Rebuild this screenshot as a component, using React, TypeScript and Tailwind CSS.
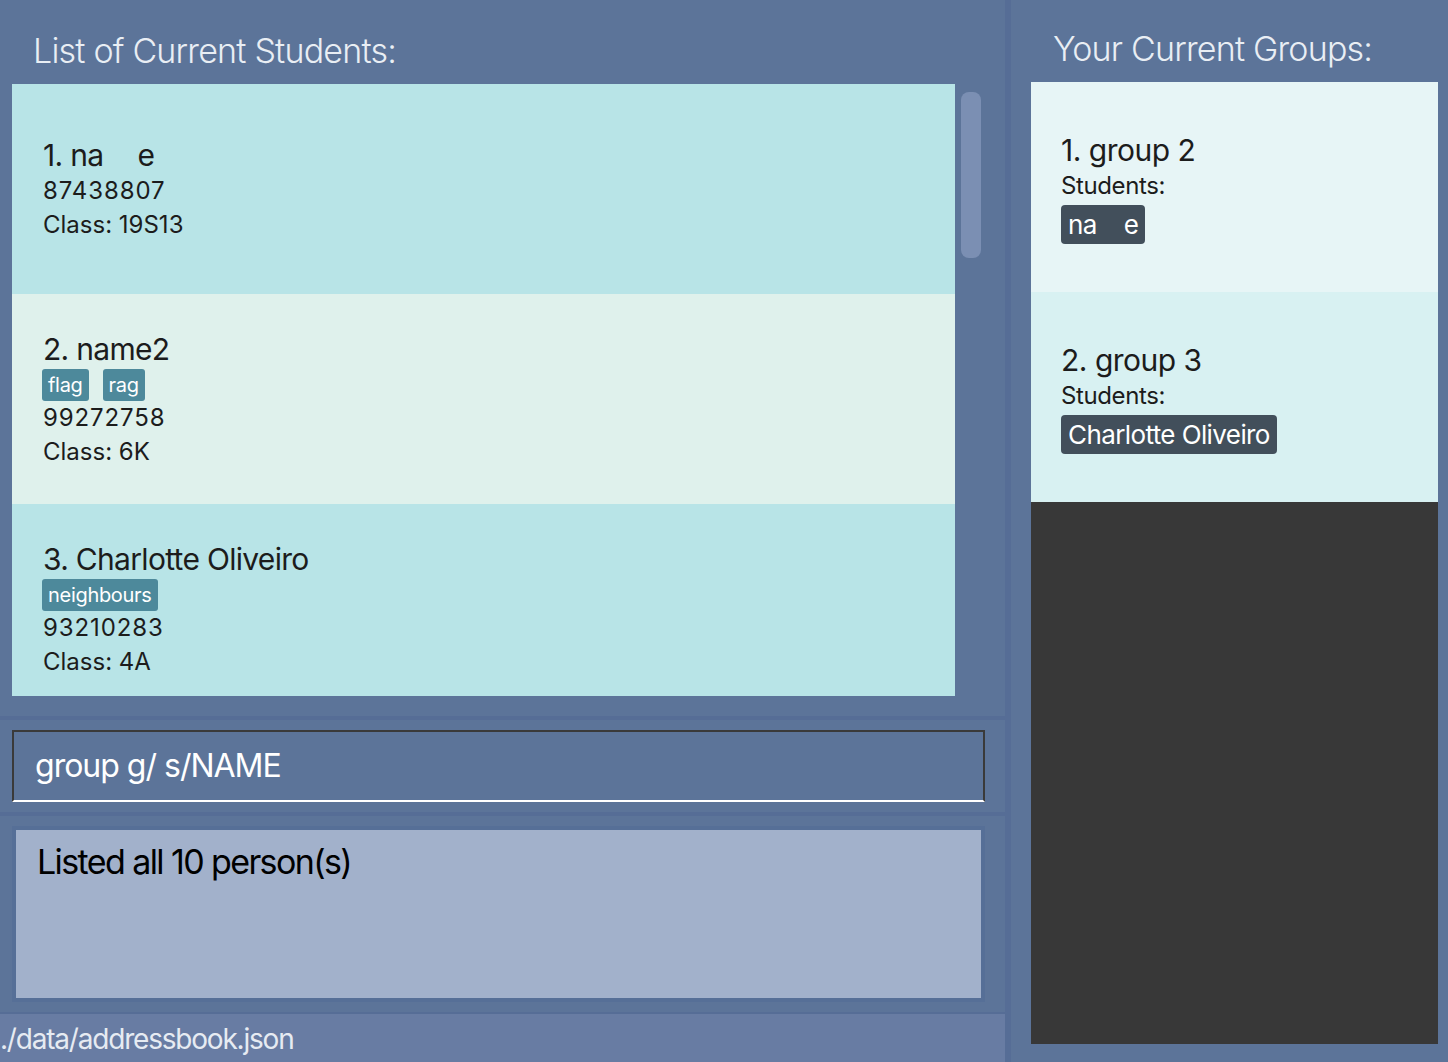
import React from "react";

const font = { fontFamily: "Inter, 'Noto Sans', sans-serif" };

function Spacer({ w }: { w: number }) {
  return <span className="inline-block" style={{ width: w }} />;
}

type Person = { idx: number; name: React.ReactNode; tags: string[]; phone: string; cls: string; bg: string };

function PersonCard({ p }: { p: Person }) {
  return (
    <div className={`h-[210px] shrink-0 flex flex-col justify-center pl-[31px] text-[#1c1c1c] ${p.bg}`}>
      <div className="text-[30px] leading-[38px] tracking-[-0.7px]">
        {p.idx}. {p.name}
      </div>
      {p.tags.length > 0 && (
        <div className="flex gap-[14px] mt-[1px] -ml-[1px]">
          {p.tags.map((t) => (
            <span key={t} className="h-[32px] px-[6px] rounded-[3px] bg-[#4d899b] text-white text-[20px] leading-[32px] tracking-[-0.3px]">
              {t}
            </span>
          ))}
        </div>
      )}
      <div className="text-[24px] leading-[34px] tracking-[0.9px]">{p.phone}</div>
      <div className="text-[24px] leading-[34px] tracking-[0px]">Class: {p.cls}</div>
    </div>
  );
}

function GroupCard({ idx, name, member, bg }: { idx: number; name: string; member: React.ReactNode; bg: string }) {
  return (
    <div className={`h-[210px] shrink-0 flex flex-col justify-center pl-[30px] text-[#1c1c1c] ${bg}`}>
      <div className="text-[30px] leading-[36px] tracking-[-0.5px] mt-[2px]">
        {idx}. {name}
      </div>
      <div className="text-[24px] leading-[32px] tracking-[-0.4px] mt-[2px]">Students:</div>
      <div className="flex mt-[3px]">
        <span className="h-[39px] px-[7px] rounded-[4px] bg-[#424f5b] text-white text-[26px] leading-[39px] tracking-[-0.6px]">
          {member}
        </span>
      </div>
    </div>
  );
}

export default function App() {
  const people: Person[] = [
    { idx: 1, name: <>na<Spacer w={34} />e</>, tags: [], phone: "87438807", cls: "19S13", bg: "bg-[#b8e4e7]" },
    { idx: 2, name: "name2", tags: ["flag", "rag"], phone: "99272758", cls: "6K", bg: "bg-[#dff1ec]" },
    { idx: 3, name: "Charlotte Oliveiro", tags: ["neighbours"], phone: "93210283", cls: "4A", bg: "bg-[#b8e4e7]" },
  ];

  return (
    <div className="w-[1448px] h-[1062px] flex bg-[#5c7499] overflow-hidden" style={font}>
      {/* Left column */}
      <div className="w-[1005px] h-full flex flex-col">
        {/* person list section */}
        <div className="h-[716px] flex flex-col">
          <div className="h-[84px] pl-[33px] pt-[29px] text-[34px] leading-[44px] text-[#e9eef4] font-light tracking-[-0.8px]">
            List of Current Students:
          </div>
          <div className="h-[612px] flex pl-[12px]">
            <div className="w-[943px] h-full overflow-hidden flex flex-col">
              {people.map((p) => (
                <PersonCard key={p.idx} p={p} />
              ))}
            </div>
            <div className="pl-[6px] pt-[8px]">
              <div className="w-[20px] h-[166px] rounded-[8px] bg-[#7b8fb3]" />
            </div>
          </div>
        </div>

        {/* command box */}
        <div className="h-[96px] border-t-4 border-[#566d96] pt-[10px] pl-[12px]">
          <div className="w-[973px] h-[72px] border-t-2 border-x-2 border-[#3a3a3a] border-b-2 border-b-white flex items-center pl-[21px] text-white text-[32px] tracking-[-1px]">
            group g/ s/NAME
          </div>
        </div>

        {/* result display */}
        <div className="h-[200px] border-t-4 border-[#566d96] pt-[10px] pl-[12px]">
          <div className="w-[973px] h-[176px] border-4 border-[#566f97] bg-[#a2b1cb] pl-[21px] pt-[10px] text-[34px] leading-[44px] text-black tracking-[-1.6px]">
            Listed all 10 person(s)
          </div>
        </div>

        {/* status bar */}
        <div className="flex-1 border-t-2 border-[#566d96] bg-[#687ca3] flex items-center text-[28px] pt-[2px] text-[#e6ebf2] tracking-[-1.2px]">
          ./data/addressbook.json
        </div>
      </div>

      {/* divider */}
      <div className="w-[6px] h-full bg-[#566d96]" />

      {/* Right column */}
      <div className="flex-1 h-full flex flex-col pl-[20px] pr-[10px]">
        <div className="h-[82px] pl-[22px] pt-[27px] text-[34px] leading-[44px] text-[#e9eef4] font-light tracking-[-0.8px]">
          Your Current Groups:
        </div>
        <div className="h-[962px] bg-[#383838] flex flex-col">
          <GroupCard idx={1} name="group 2" member={<>na<Spacer w={27} />e</>} bg="bg-[#e7f5f6]" />
          <GroupCard idx={2} name="group 3" member="Charlotte Oliveiro" bg="bg-[#d8f1f2]" />
        </div>
      </div>
    </div>
  );
}
